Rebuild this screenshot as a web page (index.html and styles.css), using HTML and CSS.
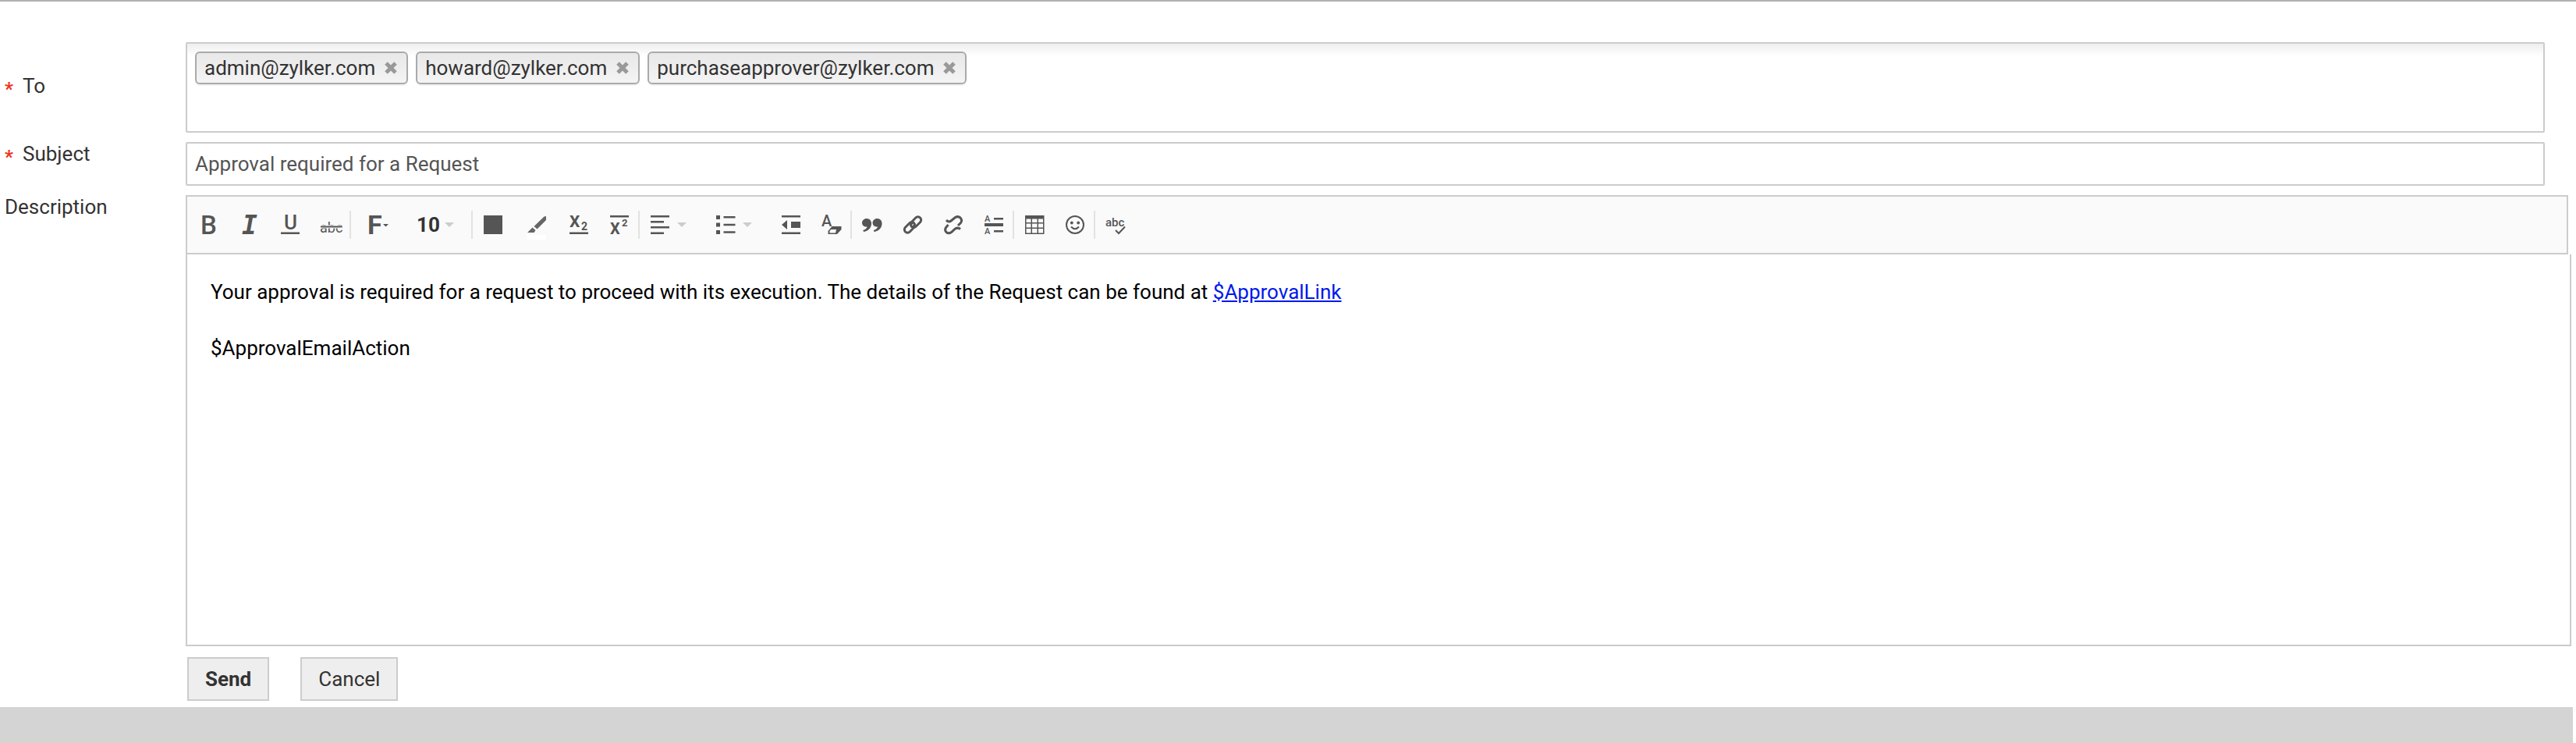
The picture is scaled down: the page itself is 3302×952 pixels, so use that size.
FILE: index.html
```html
<!DOCTYPE html>
<html lang="en">
<head>
    <meta charset="utf-8">
    <title>Submit for Approval</title>
    <link rel="stylesheet" href="styles.css">
</head>
<body>
    <form class="approval-form">
        <label class="field-label to-label" for="recipient"><span class="required">*</span>To</label>
        <div class="recipients">
            <span class="tag">admin@zylker.com
                <button type="button" class="tag-remove" aria-label="Remove admin@zylker.com"><svg width="16" height="16" viewBox="0 0 16 16"><path d="M2 2L14 14M14 2L2 14"/></svg></button>
            </span>
            <span class="tag">howard@zylker.com
                <button type="button" class="tag-remove" aria-label="Remove howard@zylker.com"><svg width="16" height="16" viewBox="0 0 16 16"><path d="M2 2L14 14M14 2L2 14"/></svg></button>
            </span>
            <span class="tag">purchaseapprover@zylker.com
                <button type="button" class="tag-remove" aria-label="Remove purchaseapprover@zylker.com"><svg width="16" height="16" viewBox="0 0 16 16"><path d="M2 2L14 14M14 2L2 14"/></svg></button>
            </span>
            <input type="text" id="recipient" class="recipient-input">
        </div>

        <label class="field-label" for="subject"><span class="required">*</span>Subject</label>
        <input type="text" id="subject" class="subject" value="Approval required for a Request">

        <span class="field-label description-label" id="descriptionLabel">Description</span>
        <div class="editor">
            <div class="toolbar">
                <button type="button" class="tool" aria-label="Bold">
                    <svg class="icon" viewBox="0 0 24 24"><text x="1" y="24" font-size="33" font-weight="500">B</text></svg>
                </button>
                <button type="button" class="tool" aria-label="Italic">
                    <svg class="icon" viewBox="0 0 24 24"><text class="slab" x="2" y="24" font-size="33">I</text></svg>
                </button>
                <button type="button" class="tool" aria-label="Underline">
                    <svg class="icon" viewBox="0 0 24 24"><text x="4" y="18" font-size="26" font-weight="500">U</text><path d="M0 21.5h24v2.5H0z"/></svg>
                </button>
                <button type="button" class="tool tool-last" aria-label="Strikethrough">
                    <svg class="icon" viewBox="0 0 24 24"><text x="-2" y="22" font-size="18">abc</text><path class="paper" d="M-1 12.5h26v4H-1z"/><path d="M-1 13.500h26v2H-1z"/></svg>
                </button>
                <button type="button" class="tool tool-font" aria-label="Font">
                    <svg class="icon icon-font" viewBox="0 0 34 24"><text x="7" y="24" font-size="34" font-weight="700">F</text><path d="M27 11h7l-3.500 3.500z"/></svg>
                </button>
                <span class="size-picker tool-last">
                    <select class="size-select" aria-label="Font size">
                        <option>8</option>
                        <option selected>10</option>
                        <option>12</option>
                    </select>
                    <svg class="caret" viewBox="0 0 12 6"><path d="M0 0h12l-6 6z"/></svg>
                </span>
                <button type="button" class="tool" aria-label="Font color">
                    <svg class="icon" viewBox="0 0 24 24"><path d="M0 0h24v24H0z"/></svg>
                </button>
                <button type="button" class="tool tool-highlight" aria-label="Highlight color">
                    <svg class="icon" viewBox="0 0 24 24"><path class="pen" d="M24 1v5L12.500 17.500l-4-3.500L21.500 1.500zM6.500 15.500l4 3.500-2 3H0z"/><path class="swatch" d="M0 25h24v6H0z"/></svg>
                </button>
                <button type="button" class="tool" aria-label="Subscript">
                    <svg class="icon" viewBox="0 0 24 24"><text x="0" y="15" font-size="21" font-weight="700">X</text><text x="15" y="19" font-size="14" font-weight="700">2</text><path d="M0 21.500h24v2.500H0z"/></svg>
                </button>
                <button type="button" class="tool tool-last" aria-label="Superscript">
                    <svg class="icon" viewBox="0 0 24 24"><path d="M0 0h24v2.500H0z"/><text x="0" y="24" font-size="20" font-weight="700">X</text><text x="15" y="14" font-size="13" font-weight="700">2</text></svg>
                </button>
                <button type="button" class="tool tool-menu" aria-label="Align">
                    <svg class="icon" viewBox="0 0 24 24"><path d="M0 0h24v2.500H0zM0 7h17v2.500H0zM0 14h24v2.500H0zM0 21.500h17v2.500H0z"/></svg>
                    <svg class="caret" viewBox="0 0 12 6"><path d="M0 0h12l-6 6z"/></svg>
                </button>
                <button type="button" class="tool tool-menu" aria-label="List">
                    <svg class="icon" viewBox="0 0 24 24"><path d="M0 0h5v5H0zM0 9.500h5v5H0zM0 19h5v5H0zM9.500 1h15v2.500h-15zM9.500 10.700h15v2.500h-15zM9.500 20.300h15v2.500h-15z"/></svg>
                    <svg class="caret" viewBox="0 0 12 6"><path d="M0 0h12l-6 6z"/></svg>
                </button>
                <button type="button" class="tool" aria-label="Indent">
                    <svg class="icon" viewBox="0 0 24 24"><path d="M0 0h24v2.500H0zM0 21.500h24v2.500H0zM12 8h12v8H12zM0 12l7-6v12z"/></svg>
                </button>
                <button type="button" class="tool tool-last" aria-label="Clear formatting">
                    <svg class="icon" viewBox="0 0 24 24"><text x="-1" y="14" font-size="20" font-weight="500">A</text><path d="M7.500 20l5-6h12v4l-5.500 6H7.500z"/><path class="paper" d="M9.500 20l1.500-2h7l-1 4.500H9.500z"/></svg>
                </button>
                <button type="button" class="tool" aria-label="Quote">
                    <svg class="icon" viewBox="0 0 24 24"><path d="M5 4c4 0 6 3 6 6.500 0 5.500-4 9.500-10 10.500l-.7-2c3-1 4.700-2.500 5.200-4.500C2 15-1 13-1 9.500-1 6.500 1.500 4 5 4z"/><path d="M18.500 4c4 0 6 3 6 6.500 0 5.500-4 9.500-10 10.500l-.7-2c3-1 4.700-2.500 5.200-4.500-3.500.5-6.500-1.500-6.500-5C12.500 6.500 15 4 18.500 4z"/></svg>
                </button>
                <button type="button" class="tool" aria-label="Insert link">
                    <svg class="icon line" viewBox="0 0 24 24"><path d="M10.500 8.500l5.300-5.500a4 4 0 0 1 5.700 0 4 4 0 0 1 0 5.700l-5.500 5.500a4 4 0 0 1-5.700 0q-1.500-2 0-3.500l2-2"/><path d="M13.500 15.500l-5.300 5.500a4 4 0 0 1-5.700 0 4 4 0 0 1 0-5.700l5.500-5.500a4 4 0 0 1 5.700 0q1.500 2 0 3.500l-2 2"/></svg>
                </button>
                <button type="button" class="tool" aria-label="Remove link">
                    <svg class="icon line" viewBox="0 0 24 24"><path d="M3 6q3 3.500 6 1l5.500-4.500q3.500-2 6.500.5 3 3.500.5 6.500l-3.500 3.500"/><path d="M5.500 12L2.500 15.500q-2 3.500.5 6 3 2.500 6.500 0L14.500 17q3.500-2 6.500.5"/></svg>
                </button>
                <button type="button" class="tool tool-last" aria-label="Horizontal rule">
                    <svg class="icon" viewBox="0 0 24 24"><text x="0" y="8" font-size="11" font-weight="500">A</text><text x="0" y="24" font-size="11" font-weight="500">A</text><path d="M12 3h12v2.500H12zM0 10h24v4H0zM12 19h12v2.500H12z"/></svg>
                </button>
                <button type="button" class="tool" aria-label="Insert table">
                    <svg class="icon" viewBox="0 0 24 24"><path fill-rule="evenodd" d="M0 0h24.500v24H0zM1.500 4.500v4.500h6V4.500zM9 4.500v4.500h6.500V4.500zM17 4.500v4.500h6V4.500zM1.500 10.500v5h6v-5zM9 10.500v5h6.500v-5zM17 10.500v5h6v-5zM1.500 17v5.500h6V17zM9 17v5.500h6.500V17zM17 17v5.500h6V17z"/></svg>
                </button>
                <button type="button" class="tool tool-last" aria-label="Insert smiley">
                    <svg class="icon" viewBox="0 0 24 24"><circle class="ring" cx="12" cy="12" r="11"/><circle cx="7.800" cy="9.500" r="1.900"/><circle cx="16.200" cy="9.500" r="1.900"/><path class="ring" d="M7 14.500q5 5.500 10 0"/></svg>
                </button>
                <button type="button" class="tool" aria-label="Spell check">
                    <svg class="icon" viewBox="0 0 24 24"><text x="-1" y="14" font-size="15" font-weight="500">abc</text><path class="ring" d="M12 19l4 4 8-8.500"/></svg>
                </button>
            </div>
            <div class="editor-body" contenteditable="true" role="textbox" aria-multiline="true" aria-labelledby="descriptionLabel">
                <p>Your approval is required for a request to proceed with its execution. The details of the Request can be found at <a href="#">$ApprovalLink</a></p>
                <p>$ApprovalEmailAction</p>
            </div>
        </div>

        <div class="actions">
            <button type="submit" class="btn btn-primary">Send</button>
            <button type="button" class="btn">Cancel</button>
        </div>
    </form>
    <footer class="page-footer"></footer>
</body>
</html>
```
FILE: styles.css
```css
* {
    box-sizing: border-box;
}

body {
    margin: 0;
    min-height: 100vh;
    display: flex;
    flex-direction: column;
    border-top: 2px solid #b0b0b0;
    background: #fff;
    color: #333;
    font-family: Roboto, sans-serif;
    font-size: 26px;
    line-height: 30px;
}

input, select, button {
    font: inherit;
    color: inherit;
}

.approval-form {
    display: grid;
    grid-template-columns: 238px 1fr;
    row-gap: 12px;
    padding: 52px 6px 8px 0;
}

/* labels */
.field-label {
    display: flex;
    align-self: start;
    padding-left: 6px;
}

.to-label {
    align-self: center;
}

.required {
    width: 23px;
    padding-top: 4px;
    color: #e32;
    font-size: 24px;
    font-weight: bold;
}

/* fields */
.recipients {
    display: flex;
    flex-wrap: wrap;
    align-items: flex-start;
    gap: 10px;
    min-height: 116px;
    margin-right: 34px;
    padding: 10px;
    border: 2px solid #ccc;
    border-radius: 2px;
    background: linear-gradient(#eee, #fff 16px);
}

.tag {
    display: flex;
    align-items: center;
    gap: 12px;
    height: 42px;
    padding: 0 12px 0 10px;
    border: 2px solid #aaa;
    border-radius: 6px;
    background: linear-gradient(#e8e8e8, #eee 50%, #f4f4f4);
    box-shadow: 0 2px 0 rgba(0, 0, 0, 0.05);
}

.tag-remove {
    display: flex;
    padding: 0;
    border: none;
    background: none;
    cursor: pointer;
}

.tag-remove svg {
    fill: none;
    stroke: #999;
    stroke-width: 5;
}

.recipient-input {
    flex: 1;
    min-width: 50px;
    height: 42px;
    padding: 0;
    border: none;
    outline: none;
    background: transparent;
}

.subject {
    height: 56px;
    margin-right: 34px;
    padding: 0 10px;
    border: 2px solid #ccc;
    border-radius: 2px;
    color: #555;
}

/* editor */
.toolbar {
    display: flex;
    align-items: center;
    height: 76px;
    margin-right: 4px;
    padding: 0 2px;
    border: 2px solid #ccc;
    background: #fafafa;
}

.tool, .size-picker {
    display: flex;
    align-items: center;
    width: 52px;
    height: 36px;
    padding: 0 0 0 14px;
    border: none;
    background: none;
}

.tool-last {
    border-right: 2px solid #e2e2e2;
}

.tool-font {
    width: 72px;
}

.tool-highlight {
    width: 58px;
    padding-left: 18px;
}

.tool-menu, .size-picker {
    width: 84px;
    gap: 10px;
}

.icon {
    flex: none;
    width: 24px;
    height: 24px;
    overflow: visible;
    fill: #555;
}

.icon-font {
    width: 34px;
}

.icon .slab {
    font-family: "DejaVu Sans Mono", monospace;
    font-style: italic;
    font-weight: bold;
}

.icon .pen {
    fill: #666;
}

.icon .swatch {
    fill: #fff;
}

.icon .paper {
    fill: #fafafa;
}

.icon .ring {
    fill: none;
    stroke: #555;
    stroke-width: 2;
}

.line {
    fill: none;
    stroke: #555;
    stroke-width: 3;
}

.caret {
    flex: none;
    width: 12px;
    height: 6px;
    fill: #ccc;
}

.size-picker {
    gap: 4px;
    padding-left: 12px;
}

.size-select {
    width: 32px;
    padding: 0;
    border: none;
    background: none;
    appearance: none;
    font-weight: bold;
}

.editor-body {
    min-height: 502px;
    padding: 30px;
    border: 2px solid #ccc;
    border-top: none;
    color: #000;
    line-height: 36px;
}

.editor-body p {
    margin: 0 0 36px;
}

.editor-body a {
    color: #0018ee;
}

/* buttons */
.actions {
    grid-column: 2;
    display: flex;
    gap: 40px;
    padding: 2px 2px 0;
}

.btn {
    height: 56px;
    padding: 0 21px;
    border: 2px solid #ccc;
    background: #eee;
    cursor: pointer;
}

.btn-primary {
    font-weight: bold;
}

.page-footer {
    flex: 1;
    margin-right: 4px;
    background: #d4d4d4;
}
```
